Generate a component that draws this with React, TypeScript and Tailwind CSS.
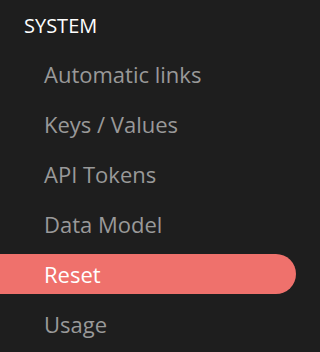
export default function App() {
  const items = ["Automatic links", "Keys / Values", "API Tokens", "Data Model", "Reset", "Usage"];
  return (
    <div className="w-[320px] h-[352px] bg-[#1e1e1e] overflow-hidden" style={{ fontFamily: '"Open Sans", sans-serif' }}>
      <div className="pl-6 pt-[8px] h-[44px] flex items-center text-[20px] text-white">SYSTEM</div>
      <div className="flex flex-col gap-[10px] pt-[10px] pr-6">
        {items.map((it) => (
          <div
            key={it}
            className={
              "h-[40px] flex items-center pl-11 text-[22px] rounded-r-full " +
              (it === "Reset" ? "bg-[#ef716c] text-white" : "text-[#999999]")
            }
          >
            {it}
          </div>
        ))}
      </div>
    </div>
  );
}
